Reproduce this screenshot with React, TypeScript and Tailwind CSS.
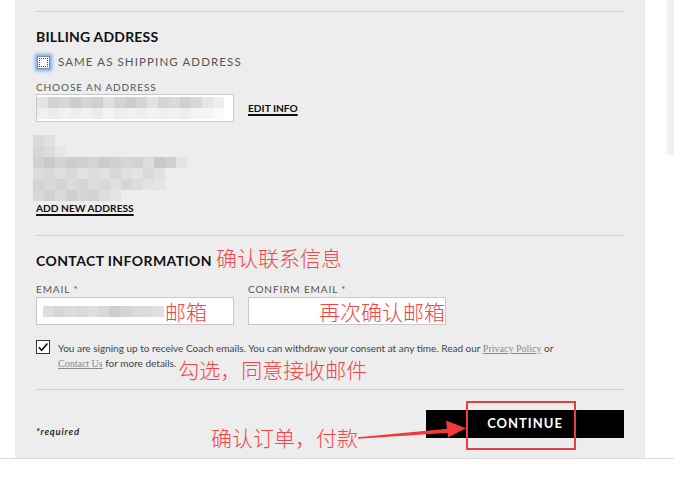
import React from "react";

const addrRows: string[][] = [
  ["bg-[#dadada]", "bg-[#e1e1e1]"],
  ["bg-[#d6d6d6]", "bg-[#dcdcdc]", "bg-[#e6e6e6]"],
  ["bg-[#d2d2d2]", "bg-[#c9c9c9]", "bg-[#d3d3d3]", "bg-[#cdcdcd]", "bg-[#d0d0d0]", "bg-[#d4d4d4]", "bg-[#cbcbcb]", "bg-[#d1d1d1]", "bg-[#d6d6d6]", "bg-[#d2d2d2]", "bg-[#dcdcdc]", "bg-[#c9c9c9]", "bg-[#cfcfcf]", "bg-[#e3e3e3]"],
  ["bg-[#dddddd]", "bg-[#d8d8d8]", "bg-[#dedede]", "bg-[#d9d9d9]", "bg-[#e2e2e2]", "bg-[#dcdcdc]", "bg-[#e0e0e0]", "bg-[#d7d7d7]", "bg-[#dfdfdf]", "bg-[#e4e4e4]", "bg-[#dadada]", "bg-[#e1e1e1]"],
  ["bg-[#d4d4d4]", "bg-[#d9d9d9]", "bg-[#d3d3d3]", "bg-[#dbdbdb]", "bg-[#d6d6d6]", "bg-[#dddddd]", "bg-[#d8d8d8]", "bg-[#e0e0e0]", "bg-[#d5d5d5]", "bg-[#dcdcdc]", "bg-[#e3e3e3]", "bg-[#e5e5e5]"],
  ["bg-[#d7d7d7]", "bg-[#d1d1d1]", "bg-[#d9d9d9]", "bg-[#cfcfcf]", "bg-[#d6d6d6]", "bg-[#d3d3d3]", "bg-[#dddddd]", "bg-[#e4e4e4]"],
];

const input1Top = ["bg-[#e4e4e4]", "bg-[#d2d2d2]", "bg-[#d8d8d8]", "bg-[#cdcdcd]", "bg-[#d5d5d5]", "bg-[#cfcfcf]", "bg-[#e0e0e0]", "bg-[#d3d3d3]", "bg-[#cccccc]", "bg-[#d6d6d6]", "bg-[#e2e2e2]", "bg-[#d4d4d4]", "bg-[#dadada]", "bg-[#cfcfcf]", "bg-[#d9d9d9]", "bg-[#e6e6e6]", "bg-[#eeeeee]"];
const input1Bot = ["bg-[#f0f0f0]", "bg-[#ececec]", "bg-[#f2f2f2]", "bg-[#eeeeee]", "bg-[#f1f1f1]", "bg-[#ebebeb]", "bg-[#f3f3f3]", "bg-[#eeeeee]", "bg-[#f0f0f0]", "bg-[#ededed]", "bg-[#f2f2f2]", "bg-[#efefef]", "bg-[#f1f1f1]", "bg-[#eeeeee]", "bg-[#f4f4f4]", "bg-[#f6f6f6]", "bg-[#fafafa]"];
const emailBlocks = ["bg-[#dedede]", "bg-[#d6d6d6]", "bg-[#dcdcdc]", "bg-[#d9d9d9]", "bg-[#dedede]", "bg-[#d8d8d8]", "bg-[#cdcdcd]", "bg-[#d4d4d4]", "bg-[#d9d9d9]", "bg-[#dcdcdc]", "bg-[#e0e0e0]"];

const red = "text-[#f24646]";
const cjkBase = "font-['Noto_Sans_CJK_SC',sans-serif] font-light text-[21px] tracking-normal";
const cjk = `${cjkBase} leading-[21px]`;

export default function App() {
  return (
    <div className="relative w-[674px] h-[478px] bg-white overflow-hidden font-['Lato','Noto_Sans_CJK_SC',sans-serif]">
      <div className="flex h-[458px]">
        <div className="ml-[15px] w-[630px] h-[458px] bg-[#ededed] px-[21px] flex flex-col">
          <div className="h-[11px]" />
          <div className="h-px bg-[#cfcfcf]" />
          <div className="mt-[17px] leading-[16px] text-[14px] font-bold text-[#111] tracking-[0.2px]">BILLING ADDRESS</div>
          <div className="mt-[9px] h-[16px] flex items-center">
            <div className="ml-px w-[13px] h-[13px] bg-white border border-[#8a8a8a] shadow-[0_0_3px_2px_rgba(90,150,255,0.8)] flex items-center justify-center">
              <div className="w-[9px] h-[9px] border border-dotted border-[#444]" />
            </div>
            <span className="ml-[8px] text-[11.5px] leading-[16px] tracking-[1.1px] text-[#555]">SAME AS SHIPPING ADDRESS</span>
          </div>
          <div className="mt-[11px] leading-[12px] text-[10px] tracking-[0.9px] text-[#555]">CHOOSE AN ADDRESS</div>
          <div className="mt-px h-[28px] flex items-center">
            <div className="w-[198px] h-[28px] bg-white border border-[#c8c8c8] flex flex-col pt-[2px] overflow-hidden">
              <div className="flex h-[11px]">
                {input1Top.map((c, i) => (
                  <div key={i} className={`w-[11px] h-[11px] ${c}`} />
                ))}
              </div>
              <div className="flex h-[11px]">
                {input1Bot.map((c, i) => (
                  <div key={i} className={`w-[11px] h-[11px] ${c}`} />
                ))}
              </div>
            </div>
            <a className="ml-[14px] text-[10.2px] leading-[12px] font-bold text-[#111] underline decoration-[1.5px] underline-offset-[2px]">EDIT INFO</a>
          </div>
          <div className="mt-[13px] h-[65px] -ml-[3px] flex flex-col">
            {addrRows.map((row, r) => (
              <div key={r} className="flex h-[11px]">
                {row.map((c, i) => (
                  <div key={i} className={`w-[11px] h-[11px] ${c}`} />
                ))}
              </div>
            ))}
          </div>
          <div className="leading-[12px]">
            <a className="text-[10.2px] font-bold text-[#111] underline decoration-[1.5px] underline-offset-[2px]">ADD NEW ADDRESS</a>
          </div>
          <div className="mt-[21px] h-px bg-[#cfcfcf]" />
          <div className="mt-[11px] h-[24px] flex items-baseline">
            <span className="text-[14px] leading-[16px] font-bold text-[#111] tracking-[0.4px]">CONTACT INFORMATION</span>
            <span className={`ml-[4px] ${cjk} ${red}`}>确认联系信息</span>
          </div>
          <div className="mt-[12px] flex leading-[12px] text-[10px] tracking-[0.9px] text-[#555]">
            <div className="w-[212px]">EMAIL *</div>
            <div>CONFIRM EMAIL *</div>
          </div>
          <div className="mt-[2px] flex h-[28px]">
            <div className="w-[198px] h-[28px] bg-white border border-[#c8c8c8] flex items-center">
              <div className="ml-[6px] flex h-[11px]">
                {emailBlocks.map((c, i) => (
                  <div key={i} className={`w-[11px] h-[11px] ${c}`} />
                ))}
              </div>
              <span className={`ml-px ${cjk} ${red}`}>邮箱</span>
            </div>
            <div className="ml-[14px] w-[198px] h-[28px] bg-white border border-[#c8c8c8] flex items-center justify-end overflow-visible">
              <span className={`${cjk} ${red} whitespace-nowrap`}>再次确认邮箱</span>
            </div>
          </div>
          <div className="mt-[15px] flex">
            <div className="w-[14px] h-[14px] shrink-0 bg-white border border-[#333] flex items-center justify-center">
              <svg width="12" height="12" viewBox="0 0 12 12">
                <path d="M1.8 6.2 L4.6 9.2 L10.4 2.4" fill="none" stroke="#111" strokeWidth="1.6" />
              </svg>
            </div>
            <p className="ml-[8px] h-[30px] pt-px text-[10px] leading-[15px] text-[#444]">
              You are signing up to receive Coach emails. You can withdraw your consent at any time. Read our{" "}
              <a className="font-['Liberation_Serif',serif] text-[#8a8a8a] underline decoration-[#8a8a8a]">Privacy Policy</a> or{" "}
              <br />
              <a className="font-['Liberation_Serif',serif] text-[#8a8a8a] underline decoration-[#8a8a8a]">Contact Us</a> for more details.
              <span className={`relative top-[11px] ml-[2px] ${cjkBase} leading-[0px] ${red}`}>勾选，同意接收邮件</span>
            </p>
          </div>
          <div className="mt-[19px] h-px bg-[#cfcfcf]" />
          <div className="mt-[20px] flex justify-between items-end">
            <span className="mb-0 text-[9.5px] leading-[12px] italic font-semibold tracking-[0.8px] text-[#111]">*required</span>
            <button className="w-[198px] h-[28px] bg-black text-white text-[13px] font-bold tracking-[1px] flex items-center justify-center">CONTINUE</button>
          </div>
        </div>
        <div className="ml-[22px] w-[7px] h-[155px] bg-[#f1f1f1]" />
      </div>
      <div className="h-px bg-[#dcdcdc]" />

      {/* annotations */}
      <span className={`absolute left-[211px] top-[427px] ${cjk} ${red}`}>确认订单，付款</span>
      <svg className="absolute left-0 top-0" width="674" height="478" viewBox="0 0 674 478">
        <polygon points="358,437.2 450,428.5 450,432.8 358,438.8" fill="#f03a3a" />
        <polygon points="446,420.5 466,428.3 448,437.5" fill="#f03a3a" />
      </svg>
      <div className="absolute left-[466px] top-[401px] w-[110px] h-[49px] border-2 border-[#ee3b3b]" />
    </div>
  );
}
